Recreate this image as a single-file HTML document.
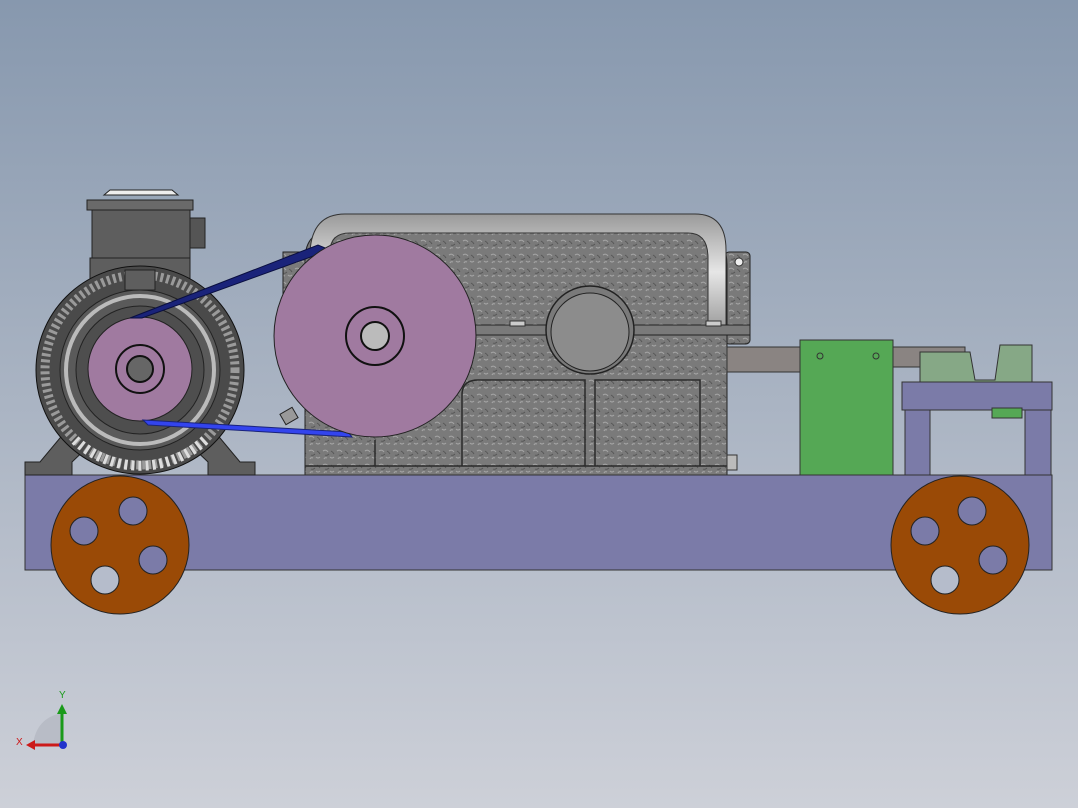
<!DOCTYPE html>
<html><head><meta charset="utf-8"><style>
html,body{margin:0;padding:0;width:1078px;height:808px;overflow:hidden}
svg{display:block}
</style></head><body>
<svg width="1078" height="808" viewBox="0 0 1078 808" xmlns="http://www.w3.org/2000/svg">
<defs>
<linearGradient id="bg" x1="0" y1="0" x2="0" y2="1">
<stop offset="0" stop-color="#8798ae"/><stop offset="1" stop-color="#cdd0d8"/>
</linearGradient>
<pattern id="tex" width="14" height="14" patternUnits="userSpaceOnUse">
<rect width="14" height="14" fill="#7a7a7a"/>
<path d="M1 3 q3 -2 5 1 M8 9 q2 2 4 0 M2 11 q1 -2 3 -1" stroke="#a4a4a4" stroke-width="1.1" fill="none"/>
<path d="M3 7 q2 1 4 -1 M9 3 q2 1 3 3" stroke="#555" stroke-width="0.9" fill="none"/>
</pattern>
<linearGradient id="tube" x1="0" y1="0" x2="0" y2="1"><stop offset="0" stop-color="#9a9a9a"/><stop offset="0.5" stop-color="#e6e6e6"/><stop offset="1" stop-color="#9a9a9a"/></linearGradient>
</defs>
<rect width="1078" height="808" fill="url(#bg)"/>

<!-- gearbox -->
<rect x="283" y="252" width="30" height="80" fill="url(#tex)" stroke="#222"/>
<rect x="725" y="252" width="25" height="92" rx="4" fill="url(#tex)" stroke="#222"/>
<path d="M305 475 V260 Q305 230 335 230 L690 230 Q727 230 727 265 V475 Z" fill="url(#tex)" stroke="#222"/>
<path d="M310 252 Q312 214 345 214 L695 214 Q726 214 726 250 L726 330 L708 330 L708 258 Q708 233 688 233 L350 233 Q330 233 330 252 Z" fill="url(#tube)" stroke="#333"/>
<rect x="470" y="325" width="280" height="10" fill="#7a7a7a" stroke="#222"/>
<circle cx="590" cy="330" r="44" fill="#7a7a7a" stroke="#222" stroke-width="1.5"/>
<circle cx="590" cy="332" r="39" fill="#8c8c8c" stroke="#222"/>
<path d="M375 466 V440 M462 466 V395 Q462 380 478 380 H585 V466 M595 466 V380 H700 V466 M305 466 H727" stroke="#2a2a2a" stroke-width="1.5" fill="none"/>
<rect x="510" y="321" width="15" height="5" fill="#ccc" stroke="#333"/>
<rect x="706" y="321" width="15" height="5" fill="#ccc" stroke="#333"/>
<rect x="727" y="455" width="10" height="15" fill="#bbb" stroke="#333"/>
<circle cx="739" cy="262" r="4" fill="#eee" stroke="#333"/>

<!-- shaft to green block -->
<rect x="727" y="347" width="75" height="25" fill="#8a8482" stroke="#333"/>
<rect x="890" y="347" width="75" height="20" fill="#8a8482" stroke="#333"/>
<!-- right stand -->
<rect x="905" y="408" width="25" height="67" fill="#7b7ba8" stroke="#333"/>
<rect x="1025" y="408" width="26" height="67" fill="#7b7ba8" stroke="#333"/>
<rect x="902" y="382" width="150" height="28" fill="#7b7ba8" stroke="#333"/>
<path d="M920 352 L970 352 L975 380 L995 380 L1000 345 L1032 345 L1032 382 L920 382 Z" fill="#86a886" stroke="#333"/>
<rect x="992" y="408" width="30" height="10" fill="#55a855" stroke="#333"/>
<!-- green block -->
<rect x="800" y="340" width="93" height="135" fill="#55a855" stroke="#333"/>
<circle cx="820" cy="356" r="3" fill="none" stroke="#333"/><circle cx="876" cy="356" r="3" fill="none" stroke="#333"/>

<!-- base -->
<rect x="25" y="475" width="1027" height="95" fill="#7b7ba8" stroke="#333"/>

<!-- motor -->
<rect x="90" y="258" width="100" height="30" fill="#5e5e5e" stroke="#222"/>
<rect x="92" y="202" width="98" height="56" fill="#5e5e5e" stroke="#222"/>
<rect x="87" y="200" width="106" height="10" fill="#6a6a6a" stroke="#222"/>
<path d="M104 195 L110 190 L172 190 L178 195 Z" fill="#eee" stroke="#222"/>
<rect x="190" y="218" width="15" height="30" fill="#555" stroke="#222"/>
<path d="M25 475 L25 462 L40 462 L75 420 L95 440 L72 462 L72 475 Z" fill="#5e5e5e" stroke="#222"/>
<path d="M255 475 L255 462 L240 462 L205 420 L185 440 L208 462 L208 475 Z" fill="#5e5e5e" stroke="#222"/>
<circle cx="140" cy="370" r="104" fill="#4a4a4a" stroke="#111"/>
<circle cx="140" cy="370" r="95" fill="none" stroke="#9a9a9a" stroke-width="9" stroke-dasharray="3 3"/>
<path d="M75 440 A95 95 0 0 0 205 440" fill="none" stroke="#ddd" stroke-width="10" stroke-dasharray="3 4"/>
<path d="M125 290 L125 270 L155 270 L155 290 Z" fill="#5e5e5e" stroke="#222"/>
<circle cx="140" cy="370" r="80" fill="#5a5a5a" stroke="#222"/>
<circle cx="140" cy="370" r="74" fill="none" stroke="#bbb" stroke-width="4"/>
<circle cx="140" cy="370" r="64" fill="#4e4e4e" stroke="#222"/>
<circle cx="140" cy="369" r="52" fill="#a07aa0" stroke="#222"/>
<circle cx="140" cy="369" r="24" fill="none" stroke="#111" stroke-width="2"/>
<circle cx="140" cy="369" r="13" fill="#666" stroke="#111" stroke-width="2"/>

<!-- belts -->
<path d="M130 318 L318 245 L330 250 L142 318 Z" fill="#1a237a" stroke="#0a0f40"/>
<path d="M143 420 L348 432 L352 437 L148 425 Z" fill="#3344ee" stroke="#1a237a"/>
<rect x="282" y="410" width="14" height="12" fill="#999" stroke="#222" transform="rotate(-30 289 416)"/>

<!-- big pulley -->
<circle cx="375" cy="336" r="101" fill="#a07aa0" stroke="#222"/>
<circle cx="375" cy="336" r="29" fill="none" stroke="#111" stroke-width="2"/>
<circle cx="375" cy="336" r="14" fill="#bbb" stroke="#111" stroke-width="2"/>

<!-- wheels -->
<g stroke="#222">
<circle cx="120" cy="545" r="69" fill="#9a4a06"/>
<circle cx="133" cy="511" r="14" fill="#7b7ba8"/><circle cx="84" cy="531" r="14" fill="#7b7ba8"/>
<circle cx="153" cy="560" r="14" fill="#7b7ba8"/><circle cx="105" cy="580" r="14" fill="#b5bccb"/>
<circle cx="960" cy="545" r="69" fill="#9a4a06"/>
<circle cx="972" cy="511" r="14" fill="#7b7ba8"/><circle cx="925" cy="531" r="14" fill="#7b7ba8"/>
<circle cx="993" cy="560" r="14" fill="#7b7ba8"/><circle cx="945" cy="580" r="14" fill="#b5bccb"/>
</g>

<!-- axis triad -->
<path d="M33 745 Q36 718 62 713 L62 745 Z" fill="#b8bcc6"/>
<line x1="62" y1="745" x2="62" y2="712" stroke="#1a9a1a" stroke-width="3"/>
<path d="M57 714 L62 704 L67 714 Z" fill="#1a9a1a"/>
<line x1="62" y1="745" x2="34" y2="745" stroke="#cc1a1a" stroke-width="3"/>
<path d="M35 740 L26 745 L35 750 Z" fill="#cc1a1a"/>
<circle cx="63" cy="745" r="4" fill="#2233cc"/>
<text x="59" y="698" font-family="Liberation Sans, sans-serif" font-size="10" fill="#1a9a1a">Y</text>
<text x="16" y="745" font-family="Liberation Sans, sans-serif" font-size="10" fill="#cc1a1a">X</text>
</svg>
</body></html>
